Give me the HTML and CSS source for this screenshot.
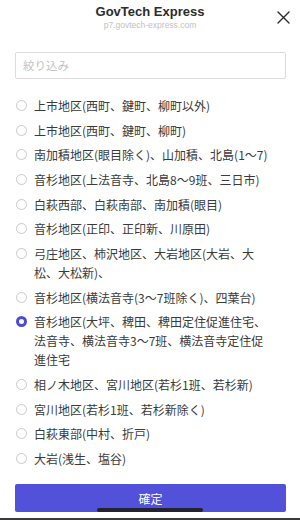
FILE: index.html
```html
<!DOCTYPE html>
<html lang="ja">
<head>
<meta charset="utf-8">
<link rel="stylesheet" href="styles.css">
</head>
<body>
<div class="sheet">
  <header class="header">
    <div class="title">GovTech Express</div>
    <div class="subtitle">p7.govtech-express.com</div>
    <button class="close" aria-label="閉じる">
      <svg width="13" height="13" viewBox="0 0 13 13"><path d="M1 1 L12 12 M12 1 L1 12" stroke="#2a2a2a" stroke-width="1.4" stroke-linecap="round" fill="none"/></svg>
    </button>
  </header>
  <div class="search"><input class="filter" type="text" placeholder="絞り込み"></div>
  <ul class="options">
    <li class="option"><span class="radio"></span><span class="label">上市地区(西町、鍵町、柳町以外)</span></li>
    <li class="option"><span class="radio"></span><span class="label">上市地区(西町、鍵町、柳町)</span></li>
    <li class="option"><span class="radio"></span><span class="label">南加積地区(眼目除く)、山加積、北島(1〜7)</span></li>
    <li class="option"><span class="radio"></span><span class="label">音杉地区(上法音寺、北島8〜9班、三日市)</span></li>
    <li class="option"><span class="radio"></span><span class="label">白萩西部、白萩南部、南加積(眼目)</span></li>
    <li class="option"><span class="radio"></span><span class="label">音杉地区(正印、正印新、川原田)</span></li>
    <li class="option"><span class="radio"></span><span class="label">弓庄地区、柿沢地区、大岩地区(大岩、大<br>松、大松新)、</span></li>
    <li class="option"><span class="radio"></span><span class="label">音杉地区(横法音寺(3〜7班除く)、四葉台)</span></li>
    <li class="option selected"><span class="radio"></span><span class="label">音杉地区(大坪、稗田、稗田定住促進住宅、法音寺、横法音寺3〜7班、横法音寺定住促進住宅</span></li>
    <li class="option"><span class="radio"></span><span class="label">相ノ木地区、宮川地区(若杉1班、若杉新)</span></li>
    <li class="option"><span class="radio"></span><span class="label">宮川地区(若杉1班、若杉新除く)</span></li>
    <li class="option"><span class="radio"></span><span class="label">白萩東部(中村、折戸)</span></li>
    <li class="option"><span class="radio"></span><span class="label">大岩(浅生、塩谷)</span></li>
  </ul>
  <div class="actions"><button class="confirm">確定</button></div>
  <div class="home-indicator"></div>
  <div class="bottom-edge"></div>
</div>
</body>
</html>
```

FILE: styles.css
```css
html, body {
  margin: 0;
  padding: 0;
  background: #ffffff;
}
body {
  font-family: "Noto Sans CJK JP", "Noto Sans", sans-serif;
  color: #3a3a3a;
}
.sheet {
  position: relative;
  width: 300px;
  height: 520px;
  overflow: hidden;
  display: flex;
  flex-direction: column;
}
.header {
  position: relative;
  padding-top: 4px;
  text-align: center;
}
.title {
  font-family: "Liberation Sans", "Noto Sans", sans-serif;
  font-weight: bold;
  font-size: 13px;
  line-height: 16px;
  color: #2b2b2b;
}
.subtitle {
  font-family: "Liberation Sans", "Noto Sans", sans-serif;
  font-size: 8.5px;
  line-height: 10px;
  color: #c2c2c2;
}
.close {
  position: absolute;
  top: 10px;
  left: 276px;
  width: 15px;
  height: 15px;
  padding: 1px;
  border: 0;
  background: transparent;
  display: flex;
  align-items: center;
  justify-content: center;
}
.search {
  padding: 21px 14px 0 15px;
}
.filter {
  box-sizing: border-box;
  width: 100%;
  height: 27px;
  border: 1px solid #dcdcdc;
  border-radius: 2px;
  padding: 0 7px;
  font-family: "Noto Sans CJK JP", sans-serif;
  font-size: 11.5px;
  color: #333;
  outline: none;
}
.filter::placeholder {
  color: #c4c4c4;
}
.options {
  list-style: none;
  margin: 14.7px 0 0;
  padding: 0;
}
.option {
  display: flex;
  align-items: flex-start;
  gap: 7px;
  padding: 2.83px 30px 2.83px 16px;
  font-size: 12px;
  line-height: 19px;
}
.radio {
  flex: none;
  box-sizing: border-box;
  width: 11px;
  height: 11px;
  margin-top: 4px;
  border: 1px solid #c9c9c9;
  border-radius: 50%;
  background: #fff;
}
.option.selected .radio {
  border: 3.2px solid #4b4bd4;
}
.label {
  flex: 1;
  min-width: 0;
}
.actions {
  padding: 13.5px 14px 0 15px;
}
.confirm {
  width: 100%;
  height: 28px;
  border: 0;
  border-radius: 2px;
  background: #5151da;
  color: #ffffff;
  font-family: "Noto Sans CJK JP", sans-serif;
  font-size: 12px;
  padding: 0;
}
.home-indicator {
  position: absolute;
  left: 97px;
  top: 508px;
  width: 106px;
  height: 4px;
  border-radius: 2px;
  background: #22232e;
}
.bottom-edge {
  margin-top: auto;
  height: 2px;
  background: #3a3a3a;
}
```
